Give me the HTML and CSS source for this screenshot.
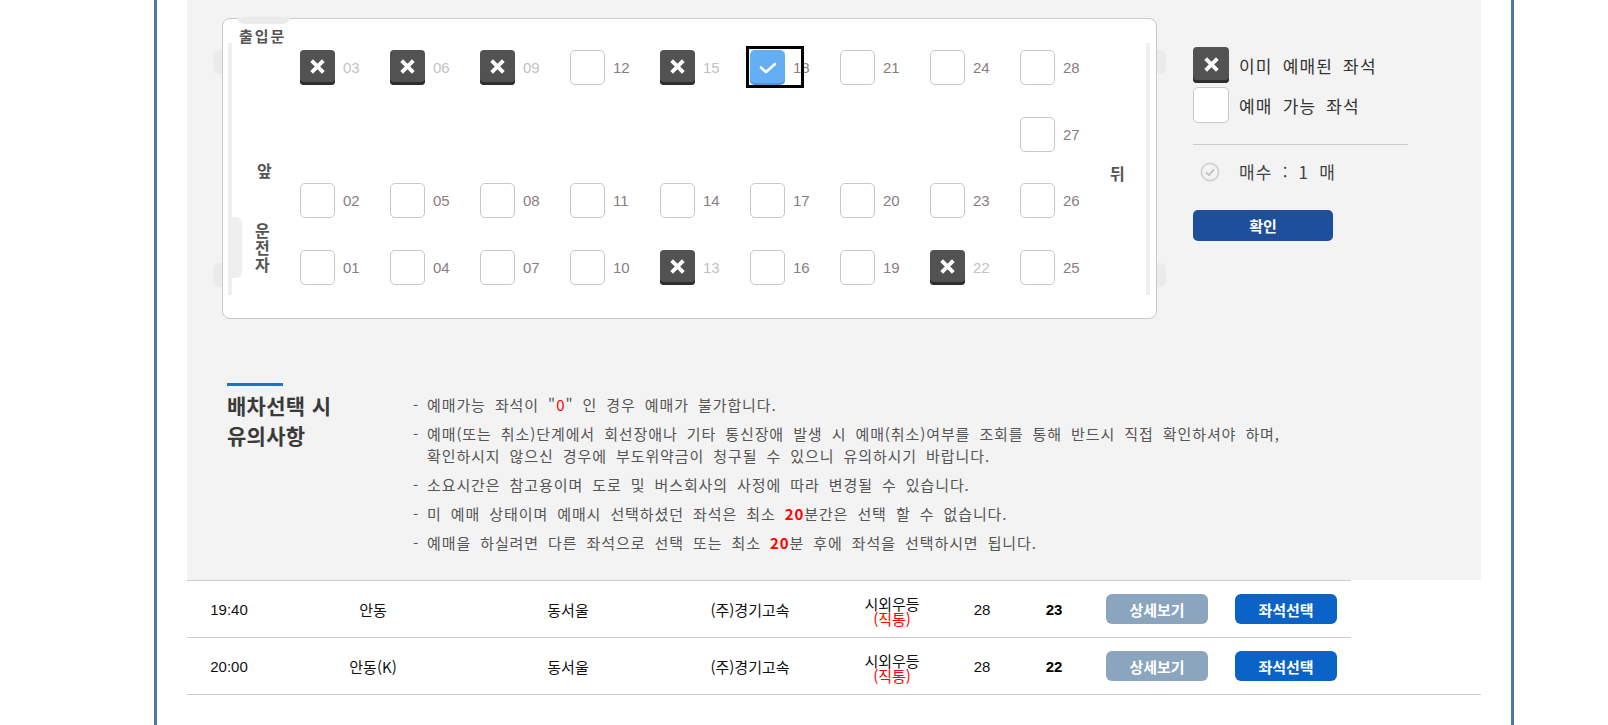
FILE: index.html
```html
<!DOCTYPE html>
<html lang="ko">
<head>
<meta charset="utf-8">
<title>좌석선택</title>
<link rel="stylesheet" href="styles.css">
</head>
<body>
<div class="frame">
  <section class="panel">
    <div class="seat-area">
      <div class="bus">
        <span class="deco tab-top"></span>
        <span class="deco tab-lt"></span>
        <span class="deco tab-lb"></span>
        <span class="deco tab-rt"></span>
        <span class="deco tab-rb"></span>
        <span class="deco strip-l"></span>
        <span class="deco strip-r"></span>
        <span class="deco bump"></span>
        <div class="bus-left">
          <span class="door">출입문</span>
          <span class="front">앞</span>
          <span class="driver"><span class="ch">운</span><span class="ch">전</span><span class="ch">자</span></span>
        </div>
        <div class="seats">
          <div class="seat booked"><span class="box"><svg class="x" viewBox="0 0 16 16"><path d="M2.5 2.5L13.5 13.5M13.5 2.5L2.5 13.5"/></svg></span><span class="num">03</span></div>
          <div class="seat booked"><span class="box"><svg class="x" viewBox="0 0 16 16"><path d="M2.5 2.5L13.5 13.5M13.5 2.5L2.5 13.5"/></svg></span><span class="num">06</span></div>
          <div class="seat booked"><span class="box"><svg class="x" viewBox="0 0 16 16"><path d="M2.5 2.5L13.5 13.5M13.5 2.5L2.5 13.5"/></svg></span><span class="num">09</span></div>
          <div class="seat"><span class="box"></span><span class="num">12</span></div>
          <div class="seat booked"><span class="box"><svg class="x" viewBox="0 0 16 16"><path d="M2.5 2.5L13.5 13.5M13.5 2.5L2.5 13.5"/></svg></span><span class="num">15</span></div>
          <div class="seat selected"><span class="box"><svg class="chk" viewBox="0 0 18 12"><path d="M2 5.5L7 10L16 2"/></svg></span><span class="num">18</span></div>
          <div class="seat"><span class="box"></span><span class="num">21</span></div>
          <div class="seat"><span class="box"></span><span class="num">24</span></div>
          <div class="seat"><span class="box"></span><span class="num">28</span></div>

          <div class="seat empty"></div>
          <div class="seat empty"></div>
          <div class="seat empty"></div>
          <div class="seat empty"></div>
          <div class="seat empty"></div>
          <div class="seat empty"></div>
          <div class="seat empty"></div>
          <div class="seat empty"></div>
          <div class="seat"><span class="box"></span><span class="num">27</span></div>

          <div class="seat"><span class="box"></span><span class="num">02</span></div>
          <div class="seat"><span class="box"></span><span class="num">05</span></div>
          <div class="seat"><span class="box"></span><span class="num">08</span></div>
          <div class="seat"><span class="box"></span><span class="num">11</span></div>
          <div class="seat"><span class="box"></span><span class="num">14</span></div>
          <div class="seat"><span class="box"></span><span class="num">17</span></div>
          <div class="seat"><span class="box"></span><span class="num">20</span></div>
          <div class="seat"><span class="box"></span><span class="num">23</span></div>
          <div class="seat"><span class="box"></span><span class="num">26</span></div>

          <div class="seat"><span class="box"></span><span class="num">01</span></div>
          <div class="seat"><span class="box"></span><span class="num">04</span></div>
          <div class="seat"><span class="box"></span><span class="num">07</span></div>
          <div class="seat"><span class="box"></span><span class="num">10</span></div>
          <div class="seat booked"><span class="box"><svg class="x" viewBox="0 0 16 16"><path d="M2.5 2.5L13.5 13.5M13.5 2.5L2.5 13.5"/></svg></span><span class="num">13</span></div>
          <div class="seat"><span class="box"></span><span class="num">16</span></div>
          <div class="seat"><span class="box"></span><span class="num">19</span></div>
          <div class="seat booked"><span class="box"><svg class="x" viewBox="0 0 16 16"><path d="M2.5 2.5L13.5 13.5M13.5 2.5L2.5 13.5"/></svg></span><span class="num">22</span></div>
          <div class="seat"><span class="box"></span><span class="num">25</span></div>
        </div>
        <div class="bus-right"><span class="rear">뒤</span></div>
      </div>

      <aside class="legend">
        <div class="legend-item"><span class="lbox lbox-booked"><svg class="x" viewBox="0 0 16 16"><path d="M2.5 2.5L13.5 13.5M13.5 2.5L2.5 13.5"/></svg></span><span>이미 예매된 좌석</span></div>
        <div class="legend-item"><span class="lbox"></span><span>예매 가능 좌석</span></div>
        <div class="count">
          <svg class="count-icon" viewBox="0 0 20 20"><circle cx="10" cy="10" r="8.6"/><path d="M6 10.3L8.9 13L14 7.4"/></svg>
          <span>매수 : 1 매</span>
        </div>
        <button class="confirm" type="button">확인</button>
      </aside>
    </div>

    <div class="notice">
      <div class="notice-title">
        <h3>배차선택 시<br>유의사항</h3>
      </div>
      <ul class="notice-list">
        <li><span class="dash">-</span><span>예매가능 좌석이 "<em class="red">0</em>" 인 경우 예매가 불가합니다.</span></li>
        <li><span class="dash">-</span><span>예매(또는 취소)단계에서 회선장애나 기타 통신장애 발생 시 예매(취소)여부를 조회를 통해 반드시 직접 확인하셔야 하며,<br>확인하시지 않으신 경우에 부도위약금이 청구될 수 있으니 유의하시기 바랍니다.</span></li>
        <li><span class="dash">-</span><span>소요시간은 참고용이며 도로 및 버스회사의 사정에 따라 변경될 수 있습니다.</span></li>
        <li><span class="dash">-</span><span>미 예매 상태이며 예매시 선택하셨던 좌석은 최소 <strong class="red">20</strong>분간은 선택 할 수 없습니다.</span></li>
        <li><span class="dash">-</span><span>예매을 하실려면 다른 좌석으로 선택 또는 최소 <strong class="red">20</strong>분 후에 좌석을 선택하시면 됩니다.</span></li>
      </ul>
    </div>
  </section>

  <div class="list">
    <div class="row">
      <span class="c time">19:40</span>
      <span class="c">안동</span>
      <span class="c">동서울</span>
      <span class="c">(주)경기고속</span>
      <span class="c grade"><span class="g1">시외우등</span><span class="g2 red">(직통)</span></span>
      <span class="c num-total">28</span>
      <span class="c num-left">23</span>
      <span class="c"><button class="btn btn-detail" type="button">상세보기</button></span>
      <span class="c"><button class="btn btn-seat" type="button">좌석선택</button></span>
    </div>
    <div class="row">
      <span class="c time">20:00</span>
      <span class="c">안동(K)</span>
      <span class="c">동서울</span>
      <span class="c">(주)경기고속</span>
      <span class="c grade"><span class="g1">시외우등</span><span class="g2 red">(직통)</span></span>
      <span class="c num-total">28</span>
      <span class="c num-left">22</span>
      <span class="c"><button class="btn btn-detail" type="button">상세보기</button></span>
      <span class="c"><button class="btn btn-seat" type="button">좌석선택</button></span>
    </div>
  </div>
</div>
</body>
</html>
```

FILE: styles.css
```css
*, *::before, *::after { box-sizing: border-box; }

body {
  margin: 0;
  background: #fff;
  font-family: "Noto Sans CJK KR", "Noto Sans", sans-serif;
  color: #333;
}

.frame {
  margin-left: 154px;
  width: 1360px;
  min-height: 725px;
  padding: 0 30px;
  border-left: 3px solid #4b79a3;
  border-right: 3px solid #4b79a3;
}

.panel {
  background: #f3f3f3;
  height: 580px;
  padding: 18px 0 0 35px;
}

.seat-area {
  display: flex;
  align-items: flex-start;
}

/* bus seat map */
.bus {
  position: relative;
  width: 935px;
  height: 301px;
  flex: none;
  border: 1px solid #c9c9c9;
  border-radius: 8px;
  background: #fff;
  display: flex;
}

.deco {
  position: absolute;
  background: #ebebeb;
}
.tab-top { left: 14px; top: -2px; width: 53px; height: 7px; border-radius: 0 0 8px 8px; }
.tab-lt { left: -10px; top: 31px; width: 9px; height: 24px; border-radius: 6px 0 0 6px; }
.tab-lb { left: -10px; top: 244px; width: 9px; height: 24px; border-radius: 6px 0 0 6px; }
.tab-rt { right: -10px; top: 31px; width: 9px; height: 24px; border-radius: 0 6px 6px 0; }
.tab-rb { right: -10px; top: 244px; width: 9px; height: 24px; border-radius: 0 6px 6px 0; }
.strip-l { left: 5px; top: 24px; width: 4px; height: 252px; background: #efefef; }
.strip-r { left: 923px; top: 24px; width: 4px; height: 252px; background: #efefef; }
.bump { left: 9px; top: 198px; width: 10px; height: 61px; border-radius: 0 6px 6px 0; background: #efefef; }

.bus-left {
  width: 77px;
  flex: none;
  display: flex;
  flex-direction: column;
  align-items: flex-start;
  color: #555;
  font-weight: 700;
}
.door { margin: 9px 0 0 16px; font-size: 15px; line-height: 16px; letter-spacing: 2px; }
.front { margin: 118px 0 0 34px; font-size: 16px; line-height: 17px; }
.driver {
  margin: 43px 0 0 32px;
  display: flex;
  flex-direction: column;
  font-size: 16px;
}
.driver .ch { display: block; height: 17px; line-height: 17px; overflow: visible; }

.seats {
  display: grid;
  grid-template-columns: repeat(9, 90px);
  grid-template-rows: repeat(4, 35px);
  row-gap: 31.5px;
  margin-top: 31px;
}

.seat {
  position: relative;
  display: flex;
  align-items: center;
  gap: 8px;
}

.box {
  width: 35px;
  height: 35px;
  display: flex;
  align-items: center;
  justify-content: center;
  border: 1px solid #c8c8c8;
  border-radius: 5px;
  background: #fff;
}

.booked .box {
  border: 0;
  border-radius: 4px;
  background: #525252;
  box-shadow: inset 0 -3px 0 #2e2e2e;
  padding-bottom: 2px;
}
.booked .num { color: #c2c2c2; }

.selected .box {
  border: 0;
  background: #64aef3;
  box-shadow: inset 0 -2px 0 #4e96d8;
}
.selected::after {
  content: "";
  position: absolute;
  left: -4px;
  top: -4px;
  width: 58px;
  height: 42px;
  border: 3px solid #000;
}

.x { width: 17px; height: 17px; }
.x path { stroke: #fff; stroke-width: 3.6; fill: none; }
.chk { width: 18px; height: 12px; }
.chk path { stroke: #fff; stroke-width: 2.6; fill: none; stroke-linecap: round; stroke-linejoin: round; }

.num {
  font-family: "Liberation Sans", Arial, sans-serif;
  font-size: 15px;
  color: #8a7d82;
}

.bus-right {
  padding-top: 146px;
  color: #555;
  font-weight: 700;
  font-size: 16px;
  line-height: 17px;
}

/* legend */
.legend {
  margin: 29px 0 0 36px;
  width: 215px;
  flex: none;
  font-size: 17px;
  color: #333;
  word-spacing: 4px;
  letter-spacing: 1.2px;
}
.legend-item {
  display: flex;
  align-items: center;
  gap: 10px;
  height: 36px;
  margin-bottom: 4px;
}
.lbox {
  width: 36px;
  height: 36px;
  display: flex;
  align-items: center;
  justify-content: center;
  border: 1px solid #c8c8c8;
  border-radius: 5px;
  background: #fff;
}
.lbox.lbox-booked {
  border: 0;
  border-radius: 4px;
  background: #525252;
  box-shadow: inset 0 -3px 0 #2e2e2e;
  padding-bottom: 2px;
}
.count {
  display: flex;
  align-items: center;
  gap: 19px;
  margin-top: 21px;
  padding: 14px 0 0 7px;
  border-top: 1px solid #cccccc;
  color: #444;
}
.count-icon { width: 20px; height: 20px; }
.count-icon circle { fill: none; stroke: #cfcfcf; stroke-width: 1.6; }
.count-icon path { fill: none; stroke: #bdbdbd; stroke-width: 1.6; }

.confirm {
  display: block;
  margin-top: 26px;
  width: 140px;
  height: 31px;
  border: 0;
  border-radius: 5px;
  background: #1e4f9c;
  color: #fff;
  font-family: inherit;
  font-size: 15px;
  font-weight: 700;
  letter-spacing: 0;
  padding: 0;
}

/* notice */
.notice {
  display: flex;
  margin-top: 64px;
  padding-left: 5px;
}
.notice-title { width: 186px; flex: none; }
.notice-title::before {
  content: "";
  display: block;
  width: 56px;
  height: 3px;
  background: #1b74c9;
  margin-bottom: 4px;
}
.notice-title h3 {
  margin: 0;
  font-size: 21px;
  line-height: 30px;
  font-weight: 700;
  letter-spacing: 0.3px;
  color: #3a3a3a;
}
.notice-list {
  list-style: none;
  margin: 11px 0 0;
  padding: 0;
  font-size: 15px;
  line-height: 22px;
  color: #555;
  word-spacing: 4px;
  letter-spacing: 0.9px;
}
.notice-list li {
  display: flex;
  margin-bottom: 7px;
}
.dash { width: 14px; flex: none; }
.red { color: #f00; font-style: normal; }
strong.red { font-weight: 700; }

/* result list */
.list {
  border-bottom: 1px solid #cccccc;
}
.row {
  width: 1164px;
  height: 57px;
  display: grid;
  grid-template-columns: 84px 204px 186px 178px 106px 74px 70px 136px 122px;
  align-items: center;
  border-top: 1px solid #cccccc;
  font-size: 15px;
  color: #111;
}
.c { text-align: center; }
.time, .num-total, .num-left {
  font-family: "Liberation Sans", Arial, sans-serif;
}
.num-left { font-weight: 700; color: #000; }
.grade {
  display: flex;
  flex-direction: column;
  align-items: center;
  padding-top: 3px;
}
.grade .g1, .grade .g2 { display: block; height: 15px; line-height: 15px; }
.btn {
  width: 102px;
  height: 30px;
  border: 0;
  border-radius: 6px;
  color: #fff;
  font-family: inherit;
  font-size: 15px;
  font-weight: 700;
  padding: 0;
  vertical-align: middle;
}
.btn-detail { background: #8aa5bd; }
.btn-seat { background: #0a64c8; }
```
